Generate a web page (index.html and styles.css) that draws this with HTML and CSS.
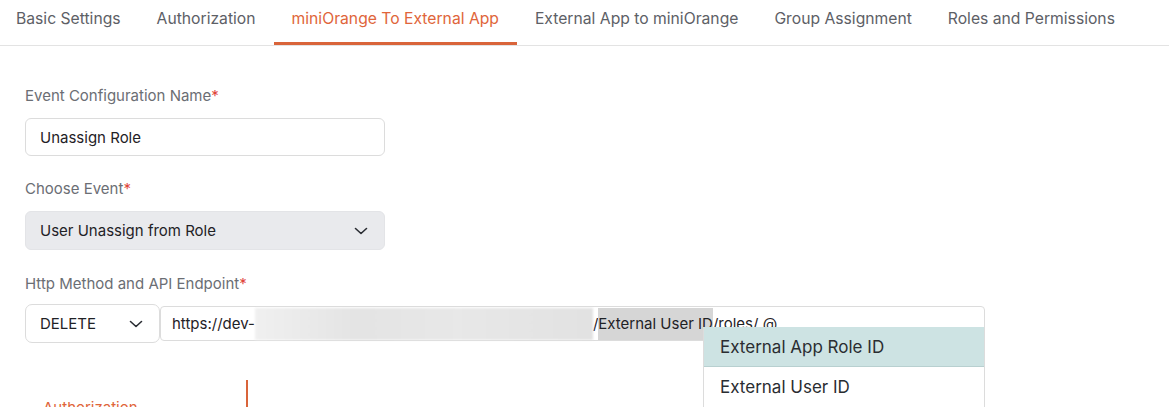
FILE: index.html
```html
<!DOCTYPE html>
<html>
<head>
<meta charset="utf-8">
<link rel="stylesheet" href="styles.css">
</head>
<body>
<nav class="tabs">
  <div class="tab">Basic Settings</div>
  <div class="tab">Authorization</div>
  <div class="tab active">miniOrange To External App</div>
  <div class="tab">External App to miniOrange</div>
  <div class="tab">Group Assignment</div>
  <div class="tab">Roles and Permissions</div>
</nav>
<main class="form">
  <div class="field">
    <label class="label">Event Configuration Name<span class="req">*</span></label>
    <div class="input wide">Unassign Role</div>
  </div>
  <div class="field f2">
    <label class="label">Choose Event<span class="req">*</span></label>
    <div class="input wide select grey">
      <span>User Unassign from Role</span>
      <svg class="chev" width="14" height="8" viewBox="0 0 14 8"><path d="M1.5 1.5 L7 6.5 L12.5 1.5" fill="none" stroke="#2a2d33" stroke-width="1.6" stroke-linecap="round" stroke-linejoin="round"/></svg>
    </div>
  </div>
  <div class="field f3">
    <label class="label">Http Method and API Endpoint<span class="req">*</span></label>
    <div class="endpoint">
      <div class="input select method">
        <span>DELETE</span>
        <svg class="chev" width="14" height="8" viewBox="0 0 14 8"><path d="M1.5 1.5 L7 6.5 L12.5 1.5" fill="none" stroke="#2a2d33" stroke-width="1.6" stroke-linecap="round" stroke-linejoin="round"/></svg>
      </div>
      <div class="url-wrap">
        <div class="input url"><span>https://dev-</span><span class="blur"></span><span>/</span><span class="hl">External User ID</span><span>/roles/ @</span></div>
        <ul class="suggest">
          <li class="on">External App Role ID</li>
          <li>External User ID</li>
        </ul>
      </div>
    </div>
  </div>
  <div class="sub">
    <div class="subnav"><div class="subitem">Authorization</div></div>
  </div>
</main>
</body>
</html>
```

FILE: styles.css
```css
* { box-sizing: border-box; }
body {
  margin: 0;
  font-family: "Inter", "Liberation Sans", sans-serif;
  font-size: 15px;
  color: #23262b;
  background: #fff;
  overflow: hidden;
  height: 407px;
}
.tabs {
  display: flex;
  height: 46px;
  border-bottom: 1px solid #e3e3e3;
  margin-left: -2px;
}
.tab {
  padding: 0 18px;
  line-height: 37px;
  height: 45px;
  color: #5d6066;
  font-size: 15.7px;
  white-space: nowrap;
}
.tab.active {
  color: #e0653a;
  border-bottom: 3px solid #d9643a;
}
.form {
  padding: 0 0 0 25px;
}
.field {
  display: flex;
  flex-direction: column;
}
.label {
  color: #6b6e74;
  font-size: 15px;
  line-height: 20px;
  margin-top: 40px;
  margin-bottom: 12px;
}
.f2 .label { margin-top: 23px; }
.f3 .label { margin-top: 24px; margin-bottom: 10px; }
.req { color: #e0463a; }
.input {
  height: 38px;
  border: 1px solid #dcdcdc;
  border-radius: 6px;
  padding: 0 14px;
  display: flex;
  align-items: center;
  color: #1f2226;
  background: #fff;
  white-space: nowrap;
}
.wide { width: 360px; }
.select { justify-content: space-between; }
.grey { background: #e9eaed; border-color: #e3e4e7; height: 39px; }
.chev { margin-right: 2px; }
.endpoint {
  display: flex;
  align-items: center;
  width: 960px;
}
.method {
  width: 135px;
  height: 39px;
  border-radius: 7px;
}
.url-wrap {
  position: relative;
  flex: 1;
}
.url {
  height: 35px;
  border-radius: 4px;
  padding-left: 11px;
  overflow: visible;
}
.blur {
  display: inline-block;
  width: 338px;
  height: 32px;
  background: linear-gradient(90deg, #f0f0f0 0%, #e4e4e4 30%, #e8e8e8 60%, #e2e2e2 100%);
  filter: blur(1px);
}
.hl {
  background: #d6d6d6;
  line-height: 32px;
}
.suggest {
  position: absolute;
  left: 543px;
  top: 21px;
  width: 282px;
  margin: 0;
  padding: 0;
  list-style: none;
  background: #fff;
  border: 1px solid #dcdcdc;
  border-top: none;
  font-size: 17px;
  color: #2a2d31;
}
.suggest li {
  height: 40px;
  line-height: 40px;
  padding-left: 16px;
}
.suggest li.on { background: #cde3e3; border-bottom: 1px solid #b8d0d0; }
.sub {
  margin-top: 37px;
  display: flex;
}
.subnav {
  width: 223px;
  height: 40px;
  border-right: 2px solid #d9643a;
  padding-top: 18px;
}
.subitem {
  color: #e0653a;
  padding-left: 18px;
  font-size: 15px;
}
```
